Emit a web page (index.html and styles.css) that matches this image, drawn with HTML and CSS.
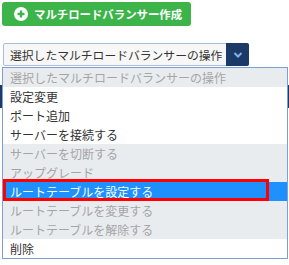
FILE: index.html
```html
<!DOCTYPE html>
<html lang="ja">
<head>
    <meta charset="UTF-8">
    <meta name="viewport" content="width=device-width, initial-scale=1.0">
    <title>マルチロードバランサー</title>
    <link rel="stylesheet" href="styles.css">
</head>
<body>
    <div class="toolbar">
        <button class="create-btn">
            <svg class="plus-icon" width="14" height="14" viewBox="0 0 14 14">
                <circle cx="7" cy="7" r="7" fill="#fff"/>
                <rect x="3.5" y="5.8" width="7" height="2.4" fill="#3cb44a"/>
                <rect x="5.8" y="3.5" width="2.4" height="7" fill="#3cb44a"/>
            </svg>
            マルチロードバランサー作成
        </button>
    </div>

    <div class="action-area">
        <div class="select-box">
            <span class="select-text">選択したマルチロードバランサーの操作</span>
            <span class="select-arrow">
                <svg width="10" height="8" viewBox="0 0 10 8">
                    <path d="M1.5 2 L5 5.5 L8.5 2" fill="none" stroke="#7fb2e8" stroke-width="2"/>
                </svg>
            </span>
        </div>

        <ul class="option-list">
            <li class="option disabled">選択したマルチロードバランサーの操作</li>
            <li class="option">設定変更</li>
            <li class="option">ポート追加</li>
            <li class="option">サーバーを接続する</li>
            <li class="option disabled">サーバーを切断する</li>
            <li class="option disabled">アップグレード</li>
            <li class="option selected">ルートテーブルを設定する</li>
            <li class="option disabled">ルートテーブルを変更する</li>
            <li class="option disabled">ルートテーブルを解除する</li>
            <li class="option">削除</li>
        </ul>
        <div class="highlight-box"></div>
    </div>

    <div class="table-head"></div>
    <div class="table-body"></div>
</body>
</html>
```

FILE: styles.css
```css
html, body {
    height: 100%;
}
body {
    margin: 0;
    font-family: "Noto Sans CJK JP", "Noto Sans", sans-serif;
    color: #333;
    background-color: #fff;
}
.toolbar {
    padding: 2px 0 0 2px;
    height: 43px;
    box-sizing: border-box;
}
.create-btn {
    display: inline-flex;
    align-items: center;
    gap: 6px;
    height: 24px;
    padding: 0 9px 0 12px;
    border: none;
    border-radius: 3px;
    background-color: #3cb44a;
    color: #fff;
    font-family: inherit;
    font-size: 11.4px;
    font-weight: bold;
    cursor: pointer;
}
.plus-icon {
    flex-shrink: 0;
}
.action-area {
    position: relative;
    padding-left: 3px;
}
.select-box {
    display: flex;
    width: 246px;
    height: 23px;
    box-sizing: border-box;
    border: 1px solid #a9bcd8;
    border-radius: 2px;
    background-color: #f7f7f7;
}
.select-text {
    flex: 1;
    padding-left: 6px;
    font-size: 11.8px;
    line-height: 21px;
    white-space: nowrap;
    overflow: hidden;
}
.select-arrow {
    display: flex;
    align-items: center;
    justify-content: center;
    width: 23px;
    margin: -1px -1px -1px 0;
    background-color: #1b3a68;
    border-radius: 0 2px 2px 0;
}
.option-list {
    position: absolute;
    top: 24px;
    left: 2px;
    width: 284px;
    margin: 0;
    padding: 0;
    list-style: none;
    border: 1px solid #7f9fd4;
    background-color: #fff;
    z-index: 2;
}
.option {
    height: 19px;
    padding-left: 7px;
    font-size: 12px;
    line-height: 19px;
    white-space: nowrap;
}
.option.disabled {
    background-color: #e9ecef;
    color: #a5a5a5;
}
.option.selected {
    background-color: #1e90ff;
    color: #fff;
}
.highlight-box {
    position: absolute;
    top: 136px;
    left: 3px;
    width: 266px;
    height: 22px;
    box-sizing: border-box;
    border: 3px solid #ff0000;
    z-index: 3;
}
.table-head {
    margin-top: 19px;
    height: 23px;
    background-color: #1b3a68;
}
.table-body {
    height: 160px;
}
```
